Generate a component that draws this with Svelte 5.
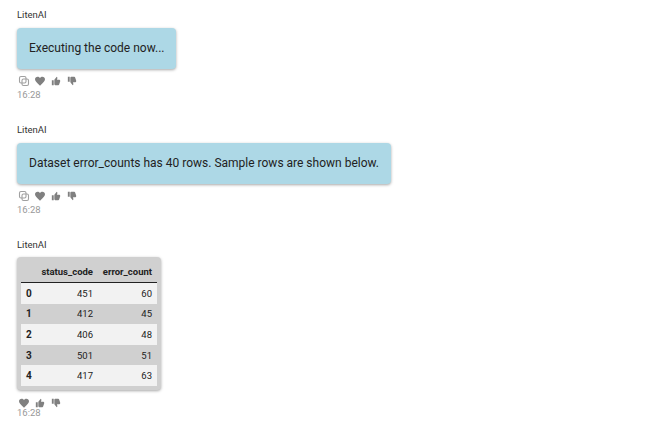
<script>
  const rows = [
    [0, 451, 60],
    [1, 412, 45],
    [2, 406, 48],
    [3, 501, 51],
    [4, 417, 63]
  ];
</script>

{#snippet actions(copy)}
  <div class="actions">
    {#if copy}
      <svg viewBox="0 0 24 24" class="icon copy">
        <rect x="3" y="3" width="13" height="13" rx="3" />
        <rect x="8" y="8" width="13" height="13" rx="3" />
      </svg>
    {/if}
    <svg viewBox="0 0 24 24" class="icon">
      <path d="M12 21.400l-1.500-1.400C5.200 15.200 2 12.300 2 8.700 2 5.800 4.300 3.500 7.200 3.500c1.900 0 3.700.9 4.800 2.400 1.100-1.500 2.900-2.400 4.800-2.400 2.900 0 5.200 2.300 5.200 5.200 0 3.600-3.200 6.500-8.500 11.300z" />
    </svg>
    <svg viewBox="0 0 24 24" class="icon thumb">
      <path d="M2 22h4.500V10H2zm20-11c0-1.100-.9-2-2-2h-5.500l.8-4.500v-.3c0-.4-.2-.8-.4-1.100L13.700 2 8.500 8.200C8.200 8.600 8 9 8 9.500V20c0 1.100.9 2 2 2h7.500c.8 0 1.500-.5 1.800-1.200l2.500-6.800c.1-.2.2-.5.2-.8z" />
    </svg>
    <svg viewBox="0 0 24 24" class="icon thumb">
      <path d="M2 2h4.500v12H2zm20 11c0 1.100-.9 2-2 2h-5.500l.8 4.500v.3c0 .4-.2.8-.4 1.100L13.700 22 8.500 15.800C8.200 15.400 8 15 8 14.500V4c0-1.100.9-2 2-2h7.500c.8 0 1.500.5 1.800 1.200l2.500 6.800c.1.200.2.5.2.8z" />
    </svg>
  </div>
{/snippet}

<main>
  <section class="message">
    <div class="sender">LitenAI</div>
    <div class="bubble">Executing the code now...</div>
    {@render actions(true)}
    <div class="time">16:28</div>
  </section>

  <section class="message">
    <div class="sender">LitenAI</div>
    <div class="bubble">Dataset error_counts has 40 rows. Sample rows are shown below.</div>
    {@render actions(true)}
    <div class="time">16:28</div>
  </section>

  <section class="message">
    <div class="sender short">LitenAI</div>
    <div class="table-card">
      <table>
        <thead>
          <tr>
            <th></th>
            <th>status_code</th>
            <th>error_count</th>
          </tr>
        </thead>
        <tbody>
          {#each rows as row}
            <tr>
              <th>{row[0]}</th>
              <td>{row[1]}</td>
              <td>{row[2]}</td>
            </tr>
          {/each}
        </tbody>
      </table>
    </div>
    <div class="table-actions">
      {@render actions(false)}
    </div>
    <div class="time tight">16:28</div>
  </section>
</main>

<style>
  :global(body) {
    margin: 0;
    background: #fff;
  }

  main {
    padding: 9px 17px 0;
    font-family: Roboto, "Liberation Sans", sans-serif;
    height: 415px;
    overflow: hidden;
  }

  .message {
    margin-bottom: 23px;
    display: flex;
    flex-direction: column;
    align-items: flex-start;
  }

  .sender {
    font-size: 9.5px;
    line-height: 12px;
    color: #333;
    margin-bottom: 7px;
  }

  .sender.short {
    margin-bottom: 6px;
  }

  .bubble {
    background: #add8e6;
    color: #222;
    font-size: 12px;
    line-height: 15px;
    padding: 13px 12px;
    border-radius: 4px;
    box-shadow: 0 1px 3px rgba(0, 0, 0, 0.35);
  }

  .actions {
    display: flex;
    align-items: center;
    gap: 4px;
    margin-top: 6px;
    height: 12px;
    margin-left: 1px;
  }

  .icon {
    width: 12px;
    height: 12px;
    fill: #808080;
    display: block;
  }

  .icon.thumb {
    width: 10px;
    height: 10px;
    margin: 0 1px;
  }

  .icon.copy {
    fill: none;
    stroke: #a0a0a0;
    stroke-width: 2.2;
  }

  .time {
    font-size: 9.5px;
    line-height: 12px;
    color: #999;
    margin-top: 2px;
  }

  .time.tight {
    margin-top: -2px;
  }

  .table-actions .actions {
    margin-top: 7px;
  }

  .table-card {
    background: #d0d0d0;
    border-radius: 4px;
    padding: 4px 4px;
    box-shadow: 0 1px 3px rgba(0, 0, 0, 0.35);
  }

  table {
    border-collapse: collapse;
    table-layout: fixed;
    font-size: 9.5px;
    color: #222;
    width: 136px;
  }

  thead th {
    text-align: right;
    font-weight: 700;
    height: 21px;
    padding: 0 5px 0 0;
    border-bottom: 1px solid #222;
    white-space: nowrap;
  }

  thead th:first-child {
    width: 14px;
  }

  thead th:nth-child(2) {
    width: 53px;
  }

  tbody th {
    text-align: left;
    padding: 0 0 0 5px;
    font-size: 10px;
  }

  td {
    text-align: right;
    padding: 0 5px 0 0;
    height: 20.6px;
  }

  tbody tr:nth-child(odd) {
    background: #f2f2f2;
  }

  tbody tr:nth-child(even) {
    background: #d0d0d0;
  }
</style>
